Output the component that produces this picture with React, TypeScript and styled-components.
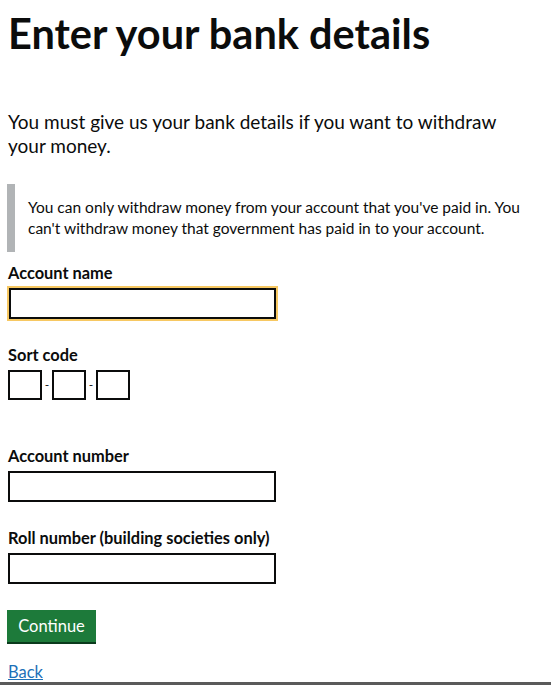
import React from "react";
import styled, { createGlobalStyle } from "styled-components";

const Global = createGlobalStyle`
  html, body { margin: 0; padding: 0; background: #fff; }
  body { font-family: Lato, "Liberation Sans", sans-serif; color: #0b0c0c; }
  * { box-sizing: border-box; }
`;

const Page = styled.main`
  width: 551px;
  height: 685px;
  padding: 8px 0 0 8px;
  display: flex;
  flex-direction: column;
  position: relative;
  overflow: hidden;
`;

const Heading = styled.h1`
  margin: 0;
  font-size: 41.5px;
  line-height: 50px;
  font-weight: 700;
`;

const Lead = styled.p`
  margin: 52px 0 0;
  font-size: 19px;
  line-height: 24px;
  max-width: 510px;
`;

const Inset = styled.div`
  margin: 26px 0 0 -1px;
  border-left: 8px solid #b1b4b6;
  padding: 13px 0 13px 13px;
  font-size: 15.5px;
  line-height: 21px;
  max-width: 530px;
`;

const Field = styled.div<{ $gap: number }>`
  margin-top: ${(p) => p.$gap}px;
  display: flex;
  flex-direction: column;
`;

const Label = styled.label`
  font-size: 16.4px;
  line-height: 20px;
  font-weight: 700;
  margin-bottom: 5px;
`;

const TextInput = styled.input<{ $focused?: boolean }>`
  width: ${(p) => (p.$focused ? 267 : 268)}px;
  height: 31px;
  border: 2px solid #0b0c0c;
  padding: 0;
  font: inherit;
  background: #fff;
  outline: ${(p) => (p.$focused ? "2px solid #f7c862" : "none")};
  outline-offset: 0;
  margin-left: ${(p) => (p.$focused ? 1 : 0)}px;
`;

const SortRow = styled.div`
  display: flex;
  align-items: center;
`;

const SortBox = styled.input`
  width: 34px;
  height: 30px;
  border: 2px solid #0b0c0c;
  padding: 0;
  background: #fff;
  font: inherit;
`;

const Dash = styled.span`
  width: 10px;
  text-align: center;
  font-size: 12px;
  line-height: 12px;
`;

const Button = styled.button`
  margin-top: 26px;
  align-self: flex-start;
  background: #1d7a3a;
  color: #fff;
  border: none;
  box-shadow: 0 2px 0 #0b3b1d;
  font-family: inherit;
  font-size: 16.5px;
  line-height: 20px;
  padding: 0;
  width: 89px;
  height: 32px;
  margin-left: -1px;
`;

const BackLink = styled.a`
  margin-top: 20px;
  color: #1d70b8;
  font-size: 16.5px;
  line-height: 20px;
  text-decoration: underline;
  align-self: flex-start;
`;

const BottomBar = styled.div`
  position: absolute;
  left: 0;
  right: 0;
  bottom: 0;
  height: 3px;
  background: #5a5a5a;
`;

export default function App() {
  return (
    <>
      <Global />
      <Page>
        <Heading>Enter your bank details</Heading>
        <Lead>You must give us your bank details if you want to withdraw your money.</Lead>
        <Inset>
          You can only withdraw money from your account that you've paid in. You can't withdraw
          money that government has paid in to your account.
        </Inset>
        <Field $gap={11}>
          <Label>Account name</Label>
          <TextInput $focused />
        </Field>
        <Field $gap={26}>
          <Label>Sort code</Label>
          <SortRow>
            <SortBox />
            <Dash>-</Dash>
            <SortBox />
            <Dash>-</Dash>
            <SortBox />
          </SortRow>
        </Field>
        <Field $gap={46}>
          <Label>Account number</Label>
          <TextInput />
        </Field>
        <Field $gap={26}>
          <Label>Roll number (building societies only)</Label>
          <TextInput />
        </Field>
        <Button>Continue</Button>
        <BackLink href="#">Back</BackLink>
        <BottomBar />
      </Page>
    </>
  );
}
